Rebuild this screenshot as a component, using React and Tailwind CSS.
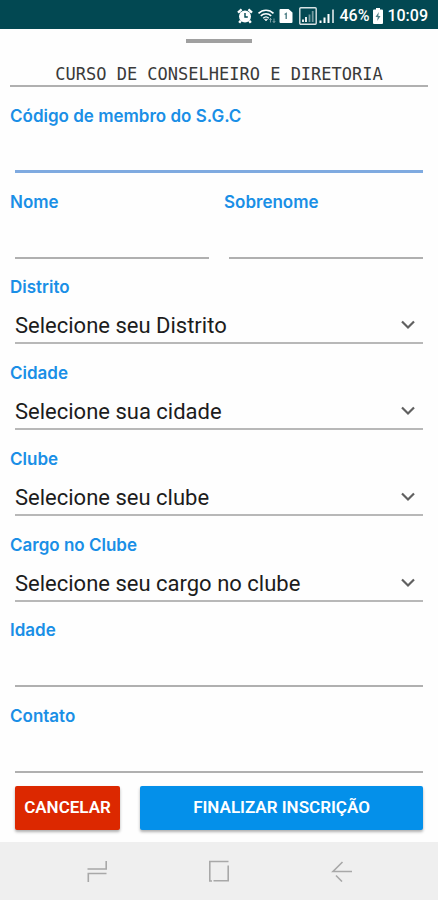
import React, { useState } from 'react';

const SELECTS = [
  { id: 'distrito', label: 'Distrito', placeholder: 'Selecione seu Distrito' },
  { id: 'cidade', label: 'Cidade', placeholder: 'Selecione sua cidade' },
  { id: 'clube', label: 'Clube', placeholder: 'Selecione seu clube' },
  { id: 'cargo', label: 'Cargo no Clube', placeholder: 'Selecione seu cargo no clube' },
];

function AlarmIcon() {
  return (
    <svg className="h-4 w-4" viewBox="0 0 16 16" fill="none">
      <circle cx="8" cy="8.5" r="6" fill="#fff" />
      <path d="M1 4.6 4.6 1.4M15 4.6 11.4 1.4M3.8 12.6 2.2 14.8M12.2 12.6l1.6 2.2" stroke="#fff" strokeWidth="2.4" />
      <path d="M8 5v4h2.8" stroke="#024852" strokeWidth="1.4" />
    </svg>
  );
}

function WifiIcon() {
  return (
    <svg className="h-4 w-5" viewBox="0 0 20 16" fill="none" stroke="#fff">
      <path d="M1.5 5.4c4.3-4.2 10.7-4.2 15 0" strokeWidth="1.6" />
      <path d="M3.8 7.9c3-3 7.4-3 10.4 0" strokeWidth="1.5" />
      <path d="M6.2 10.2c1.7-1.6 3.9-1.6 5.6 0" strokeWidth="1.4" />
      <path d="M7.4 11.2h3.2L9 13z" fill="#fff" strokeWidth="0.5" />
      <path d="M13.5 14.5v-4m-1.2 1.3 1.2-1.3 1.2 1.3M17 10.5v4m-1.2-1.3 1.2 1.3 1.2-1.3" strokeWidth="0.8" opacity="0.6" />
    </svg>
  );
}

function SimIcon() {
  return (
    <svg className="h-4 w-3.5" viewBox="0 0 14 16" fill="none">
      <path d="M1.5 1h8L13.500 4.500V14a1 1 0 0 1-1 1H1.500a1 1 0 0 1-1-1V2a1 1 0 0 1 1-1z" fill="#fff" />
      <path d="M5.600 6.500 7.200 5.500V11" stroke="#4f7f86" strokeWidth="1.400" />
    </svg>
  );
}

function BoxedSignalIcon() {
  return (
    <svg className="h-5 w-[18px]" viewBox="0 0 18 20" fill="none" stroke="#fff">
      <rect x="0.8" y="1.8" width="16.4" height="16.4" rx="1" strokeWidth="1.4" opacity="0.85" />
      <path d="M4 13.500V16M7 11V16" strokeWidth="1.800" />
      <path d="M10.500 8.500V16M13.700 5V16" strokeWidth="1.800" opacity="0.450" />
    </svg>
  );
}

function SignalIcon() {
  return (
    <svg className="h-4 w-4" viewBox="0 0 16 16" fill="none" stroke="#fff">
      <path d="M1.5 12.5V15M5.5 9.5V15M9.5 6V15" strokeWidth="2" />
      <path d="M14 1.5V15" strokeWidth="2" opacity="0.7" />
    </svg>
  );
}

function BatteryIcon() {
  return (
    <svg className="h-4 w-2.5" viewBox="0 0 10 16">
      <path d="M3 0h4v1.5h2a1 1 0 0 1 1 1V15a1 1 0 0 1-1 1H1a1 1 0 0 1-1-1V2.5a1 1 0 0 1 1-1h2z" fill="#fff" />
      <path d="M5.8 4 2.5 9h2.200l-.5 4L7.500 8H5.300z" fill="#4f7f86" />
    </svg>
  );
}

function StatusBar() {
  return (
    <header className="flex h-[29px] shrink-0 items-center justify-end bg-[#024852] pt-0.5 pr-2.5 text-base font-medium text-white">
      <AlarmIcon />
      <span className="ml-1 flex"><WifiIcon /></span>
      <span className="ml-0.5 flex"><SimIcon /></span>
      <span className="ml-1.5 flex"><BoxedSignalIcon /></span>
      <span className="ml-0.5 flex"><SignalIcon /></span>
      <span className="ml-1">46%</span>
      <span className="mx-1 flex"><BatteryIcon /></span>
      <span>10:09</span>
    </header>
  );
}

function FieldLabel({ htmlFor, children }) {
  return (
    <label htmlFor={htmlFor} className="block text-[17px] leading-6 font-semibold text-[#1a8fe6] font-['Inter',sans-serif]">
      {children}
    </label>
  );
}

function TextField({ id, label, focused }) {
  return (
    <div className="min-w-0 flex-1">
      <FieldLabel htmlFor={id}>{label}</FieldLabel>
      <div className="mx-[5px]">
        <input
          id={id}
          className={`block h-[45px] w-full pt-2.5 text-[22px] text-[#1c1c1c] outline-none ${
            focused ? 'border-b-3 border-[#7faae0]' : 'border-b-2 border-[#b0b0b0]'
          }`}
        />
      </div>
    </div>
  );
}

function SelectField({ id, label, placeholder }) {
  const [value, setValue] = useState('');

  return (
    <div>
      <FieldLabel htmlFor={id}>{label}</FieldLabel>
      <div className="relative mx-[5px]">
        <select
          id={id}
          value={value}
          onChange={(e) => setValue(e.target.value)}
          className="block h-[45px] w-full appearance-none border-b-2 border-[#b8b8b8] pt-2.5 pr-8 text-[22px] text-[#1c1c1c] outline-none"
        >
          <option value="">{placeholder}</option>
        </select>
        <svg className="pointer-events-none absolute right-2 bottom-3 h-3.5 w-3.5" viewBox="0 0 14 14" fill="none">
          <path d="M1 3.500l6 6 6-6" stroke="#606060" strokeWidth="2.200" />
        </svg>
      </div>
    </div>
  );
}

function NavBar() {
  return (
    <nav className="flex h-[58px] shrink-0 items-center justify-between bg-[#efefef] px-[86px] text-[#a8a8a8]">
      <button type="button" aria-label="Recentes">
        <svg className="h-[22px] w-[22px]" viewBox="0 0 22 22" fill="none" stroke="currentColor" strokeWidth="1.6">
          <path d="M1.500 9H20.200V1M20.500 13.500H2.300V22" />
        </svg>
      </button>
      <button type="button" aria-label="Início">
        <svg className="h-[22px] w-[22px]" viewBox="0 0 22 22" fill="none" stroke="currentColor" strokeWidth="1.6">
          <path d="M20.500 1.500H1.800V21H4M5.500 20.800H20.200V5.500" />
        </svg>
      </button>
      <button type="button" aria-label="Voltar">
        <svg className="h-[22px] w-[22px]" viewBox="0 0 22 22" fill="none" stroke="currentColor" strokeWidth="1.6">
          <path d="M22 11.500H3L12.500 2M6 15.500l6 6" />
        </svg>
      </button>
    </nav>
  );
}

export default function App() {
  return (
    <div className="flex min-h-screen flex-col bg-[#fefefe] font-['Roboto',sans-serif]">
      <StatusBar />
      <main className="flex flex-1 flex-col px-2.5 pt-2.5 pb-3">
        <div className="mx-auto h-1 w-[66px] bg-[#a0a0a0]" />
        <h1 className="mt-5 mb-[17px] border-b-2 border-[#b0b0b0] text-center text-[17px] leading-[22px] text-[#3a3a3a] font-['DejaVu_Sans_Mono',monospace]">
          CURSO DE CONSELHEIRO E DIRETORIA
        </h1>
        <form className="flex flex-1 flex-col" onSubmit={(e) => e.preventDefault()}>
          <div className="flex flex-1 flex-col justify-between">
            {/* flex-none so only the row's own height counts in the column */}
            <div className="flex flex-none">
              <TextField id="codigo" label="Código de membro do S.G.C" focused />
            </div>
            <div className="flex flex-none gap-2.5">
              <TextField id="nome" label="Nome" />
              <TextField id="sobrenome" label="Sobrenome" />
            </div>
            {SELECTS.map((s) => (
              <SelectField key={s.id} {...s} />
            ))}
            <div className="flex flex-none">
              <TextField id="idade" label="Idade" />
            </div>
            <div className="flex flex-none">
              <TextField id="contato" label="Contato" />
            </div>
          </div>
          <div className="mx-[5px] mt-[13px] flex gap-5 text-[17px] font-semibold text-white">
            <button type="button" className="h-11 w-[105px] rounded-xs bg-[#dc2800] shadow-[0_2px_3px_#00000050]">
              CANCELAR
            </button>
            <button type="submit" className="h-11 flex-1 rounded-xs bg-[#0490ea] shadow-[0_2px_3px_#00000050]">
              FINALIZAR INSCRIÇÃO
            </button>
          </div>
        </form>
      </main>
      <NavBar />
    </div>
  );
}
